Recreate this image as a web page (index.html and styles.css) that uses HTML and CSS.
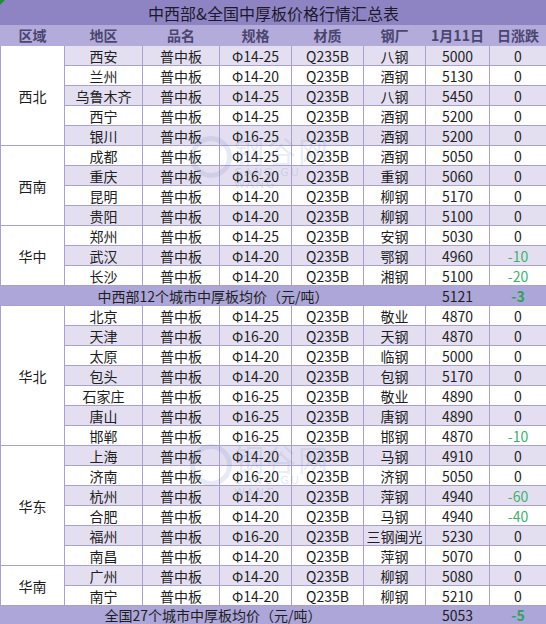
FILE: index.html
```html
<!DOCTYPE html>
<html lang="zh">
<head>
<meta charset="utf-8">
<link rel="stylesheet" href="styles.css">
</head>
<body>
<div class="sheet">
<table class="tbl">
<colgroup>
<col class="c1"><col class="c2"><col class="c3"><col class="c4"><col class="c5"><col class="c6"><col class="c7"><col class="c8">
</colgroup>
<thead>
<tr class="title"><th colspan="8">中西部&amp;全国中厚板价格行情汇总表</th></tr>
<tr class="head"><th>区域</th><th>地区</th><th>品名</th><th>规格</th><th>材质</th><th>钢厂</th><th>1月11日</th><th>日涨跌</th></tr>
</thead>
<tbody>
<tr class="alt"><td class="reg" rowspan="5">西北</td><td>西安</td><td>普中板</td><td>Φ14-25</td><td>Q235B</td><td>八钢</td><td>5000</td><td>0</td></tr>
<tr><td>兰州</td><td>普中板</td><td>Φ14-20</td><td>Q235B</td><td>酒钢</td><td>5130</td><td>0</td></tr>
<tr class="alt"><td>乌鲁木齐</td><td>普中板</td><td>Φ14-25</td><td>Q235B</td><td>八钢</td><td>5450</td><td>0</td></tr>
<tr><td>西宁</td><td>普中板</td><td>Φ14-25</td><td>Q235B</td><td>酒钢</td><td>5200</td><td>0</td></tr>
<tr class="alt"><td>银川</td><td>普中板</td><td>Φ16-25</td><td>Q235B</td><td>酒钢</td><td>5200</td><td>0</td></tr>
<tr><td class="reg" rowspan="4">西南</td><td>成都</td><td>普中板</td><td>Φ14-25</td><td>Q235B</td><td>酒钢</td><td>5050</td><td>0</td></tr>
<tr class="alt"><td>重庆</td><td>普中板</td><td>Φ16-20</td><td>Q235B</td><td>重钢</td><td>5060</td><td>0</td></tr>
<tr><td>昆明</td><td>普中板</td><td>Φ14-20</td><td>Q235B</td><td>柳钢</td><td>5170</td><td>0</td></tr>
<tr class="alt"><td>贵阳</td><td>普中板</td><td>Φ14-20</td><td>Q235B</td><td>柳钢</td><td>5100</td><td>0</td></tr>
<tr><td class="reg" rowspan="3">华中</td><td>郑州</td><td>普中板</td><td>Φ14-25</td><td>Q235B</td><td>安钢</td><td>5030</td><td>0</td></tr>
<tr class="alt"><td>武汉</td><td>普中板</td><td>Φ14-20</td><td>Q235B</td><td>鄂钢</td><td>4960</td><td class="neg">-10</td></tr>
<tr><td>长沙</td><td>普中板</td><td>Φ14-20</td><td>Q235B</td><td>湘钢</td><td>5100</td><td class="neg">-20</td></tr>
<tr class="avg"><td colspan="6">中西部12个城市中厚板均价（元/吨）</td><td>5121</td><td class="negb">-3</td></tr>
<tr><td class="reg" rowspan="7">华北</td><td>北京</td><td>普中板</td><td>Φ14-25</td><td>Q235B</td><td>敬业</td><td>4870</td><td>0</td></tr>
<tr class="alt"><td>天津</td><td>普中板</td><td>Φ16-20</td><td>Q235B</td><td>天钢</td><td>4870</td><td>0</td></tr>
<tr><td>太原</td><td>普中板</td><td>Φ14-20</td><td>Q235B</td><td>临钢</td><td>5000</td><td>0</td></tr>
<tr class="alt"><td>包头</td><td>普中板</td><td>Φ14-20</td><td>Q235B</td><td>包钢</td><td>5170</td><td>0</td></tr>
<tr><td>石家庄</td><td>普中板</td><td>Φ16-25</td><td>Q235B</td><td>敬业</td><td>4890</td><td>0</td></tr>
<tr class="alt"><td>唐山</td><td>普中板</td><td>Φ16-25</td><td>Q235B</td><td>唐钢</td><td>4890</td><td>0</td></tr>
<tr><td>邯郸</td><td>普中板</td><td>Φ16-25</td><td>Q235B</td><td>邯钢</td><td>4870</td><td class="neg">-10</td></tr>
<tr class="alt"><td class="reg" rowspan="6">华东</td><td>上海</td><td>普中板</td><td>Φ14-20</td><td>Q235B</td><td>马钢</td><td>4910</td><td>0</td></tr>
<tr><td>济南</td><td>普中板</td><td>Φ16-20</td><td>Q235B</td><td>济钢</td><td>5050</td><td>0</td></tr>
<tr class="alt"><td>杭州</td><td>普中板</td><td>Φ14-20</td><td>Q235B</td><td>萍钢</td><td>4940</td><td class="neg">-60</td></tr>
<tr><td>合肥</td><td>普中板</td><td>Φ14-20</td><td>Q235B</td><td>马钢</td><td>4940</td><td class="neg">-40</td></tr>
<tr class="alt"><td>福州</td><td>普中板</td><td>Φ16-20</td><td>Q235B</td><td>三钢闽光</td><td>5230</td><td>0</td></tr>
<tr><td>南昌</td><td>普中板</td><td>Φ14-20</td><td>Q235B</td><td>萍钢</td><td>5070</td><td>0</td></tr>
<tr class="alt"><td class="reg" rowspan="2">华南</td><td>广州</td><td>普中板</td><td>Φ14-20</td><td>Q235B</td><td>柳钢</td><td>5080</td><td>0</td></tr>
<tr><td>南宁</td><td>普中板</td><td>Φ14-20</td><td>Q235B</td><td>柳钢</td><td>5210</td><td>0</td></tr>
<tr class="avg last"><td colspan="6">全国27个城市中厚板均价（元/吨）</td><td>5053</td><td class="negb">-5</td></tr>
</tbody>
</table>
<div class="corner"></div>
<div class="wm wm1"><span class="wm-ring"></span><span class="wm-text">钢谷网</span><span class="wm-sub">GANG GU WANG</span></div>
<div class="wm wm2"><span class="wm-ring"></span><span class="wm-text">钢谷网</span><span class="wm-sub">GANG GU WANG</span></div>
</div>
</body>
</html>
```

FILE: styles.css
```css
html, body {
  margin: 0;
  padding: 0;
  background: #ffffff;
}
.sheet {
  position: relative;
  width: 546px;
  height: 624px;
  overflow: hidden;
  font-family: "Noto Sans CJK SC", "Microsoft YaHei", sans-serif;
}
.tbl {
  width: 546px;
  border-collapse: collapse;
  table-layout: fixed;
  color: #1e1e1e;
  font-size: 14px;
}
.c1 { width: 64px; }
.c2 { width: 78px; }
.c3 { width: 77px; }
.c4 { width: 72px; }
.c5 { width: 72px; }
.c6 { width: 62px; }
.c7 { width: 64px; }
.c8 { width: 57px; }
.tbl th, .tbl td {
  padding: 0;
  text-align: center;
  white-space: nowrap;
  overflow: hidden;
  line-height: 18px;
  border: 1px solid #a8a1cf;
}
.title th {
  height: 23px;
  background: #8e84c4;
  font-size: 16px;
  font-weight: normal;
  color: #1c1a2a;
  border-color: #8e84c4;
}
.head th {
  height: 20px;
  background: #b3acda;
  color: #4b4670;
  font-weight: bold;
  font-size: 14px;
  border-color: #b3acda;
}
.tbl td {
  height: 19px;
  background: #ffffff;
}
.tbl tr.alt td {
  background: #e3dff0;
}
.tbl tr.alt td.reg, .tbl td.reg {
  background: #ffffff;
}
.tbl tr.avg td {
  background: #ada6d8;
  border-left-color: #ada6d8;
  border-right-color: #ada6d8;
}
.tbl tr.last td {
  height: 18px;
}
.neg {
  color: #3bb36a;
}
.negb {
  color: #2aa558;
  font-weight: bold;
}
.corner {
  position: absolute;
  left: 0;
  top: 0;
  width: 0;
  height: 0;
  border-top: 5px solid #2a8a3c;
  border-right: 5px solid transparent;
}
.wm {
  position: absolute;
  width: 150px;
  height: 50px;
  pointer-events: none;
}
.wm1 { left: 190px; top: 132px; }
.wm2 { left: 190px; top: 440px; }
.wm-ring {
  position: absolute;
  left: 0;
  top: 4px;
  width: 32px;
  height: 32px;
  border: 5px solid rgba(120, 140, 200, 0.18);
  border-radius: 50%;
}
.wm-text {
  position: absolute;
  left: 44px;
  top: 0;
  font-size: 30px;
  line-height: 36px;
  color: rgba(120, 140, 200, 0.18);
  letter-spacing: 2px;
}
.wm-sub {
  position: absolute;
  left: 44px;
  top: 35px;
  font-size: 11px;
  line-height: 12px;
  color: rgba(120, 140, 200, 0.22);
  letter-spacing: 2px;
  font-family: "DejaVu Sans", sans-serif;
}
```
